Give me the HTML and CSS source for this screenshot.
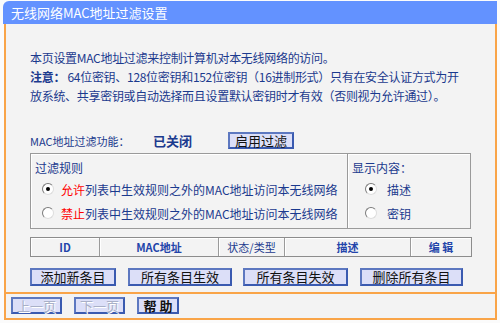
FILE: index.html
```html
<!DOCTYPE html>
<html lang="zh-CN">
<head>
    <meta charset="UTF-8">
    <title>无线网络MAC地址过滤设置</title>
    <link rel="stylesheet" href="styles.css">
</head>
<body>

<div class="frame">
    <div class="titlebar">无线网络MAC地址过滤设置</div>

    <div class="panel">
        <div class="content">
            <div class="line">本页设置MAC地址过滤来控制计算机对本无线网络的访问。</div>
            <div class="line"><strong>注意：</strong>&nbsp;64位密钥、128位密钥和152位密钥（16进制形式）只有在安全认证方式为开</div>
            <div class="line">放系统、共享密钥或自动选择而且设置默认密钥时才有效（否则视为允许通过）。</div>

            <div class="switch-row">
                <span class="switch-label">MAC地址过滤功能：</span>
                <span class="switch-state">已关闭</span>
                <button class="btn btn-enable">启用过滤</button>
            </div>

            <div class="boxes">
                <div class="box box-rules">
                    <div class="box-title">过滤规则</div>
                    <div class="radio-row">
                        <span class="radio checked"></span>
                        <span><em>允许</em>列表中生效规则之外的MAC地址访问本无线网络</span>
                    </div>
                    <div class="radio-row">
                        <span class="radio"></span>
                        <span><em>禁止</em>列表中生效规则之外的MAC地址访问本无线网络</span>
                    </div>
                </div>
                <div class="box box-show">
                    <div class="box-title">显示内容：</div>
                    <div class="radio-row">
                        <span class="radio checked"></span>
                        <span>描述</span>
                    </div>
                    <div class="radio-row">
                        <span class="radio"></span>
                        <span>密钥</span>
                    </div>
                </div>
            </div>

            <div class="table-head">
                <div class="cell col-id">ID</div>
                <div class="cell col-mac">MAC地址</div>
                <div class="cell col-state">状态/类型</div>
                <div class="cell col-desc">描述</div>
                <div class="cell col-edit">编 辑</div>
            </div>

            <div class="actions">
                <button class="btn btn-add">添加新条目</button>
                <button class="btn btn-on">所有条目生效</button>
                <button class="btn btn-off">所有条目失效</button>
                <button class="btn btn-del">删除所有条目</button>
            </div>
        </div>

        <div class="nav">
            <button class="btn btn-nav" disabled>上一页</button>
            <button class="btn btn-nav" disabled>下一页</button>
            <button class="btn btn-help">帮 助</button>
        </div>
    </div>
</div>

</body>
</html>
```

FILE: styles.css
```css
/* Reset */
* {
    box-sizing: border-box;
    margin: 0;
    padding: 0;
}

body {
    font-family: "Noto Sans CJK SC", "Liberation Sans", sans-serif;
    font-size: 12px;
    background-color: #fbfbfb;
    color: #1b3a8e;
}

/* Marco principal */
.frame {
    width: 494px;
    margin: 1px 0 0 3px;
}

.titlebar {
    height: 23px;
    line-height: 23px;
    padding-left: 8px;
    background-color: #6392ff;
    border-top-left-radius: 6px;
    color: #fff;
    font-size: 13px;
}

.panel {
    margin-left: 1px;
    border: 2px solid #f9a448;
    border-top: none;
    background-color: #f3f3f3;
}

.content {
    padding: 24px 0 6px 24px;
    border-bottom: 2px solid #f9a448;
}

/* Textos */
.line {
    height: 19px;
    line-height: 19px;
    white-space: nowrap;
    letter-spacing: -0.3px;
}

.line strong {
    font-weight: bold;
}

.switch-row {
    display: flex;
    align-items: center;
    height: 17px;
    margin-top: 27px;
}

.switch-label {
    width: 123px;
    font-size: 11px;
}

.switch-state {
    width: 75px;
    font-size: 13px;
    font-weight: bold;
}

/* Cajas */
.boxes {
    display: flex;
    margin-top: 4px;
    height: 76px;
}

.box {
    border: 1px solid #9a9a9a;
    box-shadow: inset 1px 1px 0 #fff;
    padding: 5px 0 0 4px;
}

.box-rules {
    width: 318px;
}

.box-show {
    width: 124px;
    margin-left: -1px;
}

.box-title {
    height: 18px;
    line-height: 18px;
}

.radio-row {
    display: flex;
    align-items: center;
    height: 24px;
    padding-left: 7px;
}

.radio-row em {
    font-style: normal;
    color: #f00;
}

.box-rules .radio-row .radio {
    margin-right: 7px;
}

.box-show .radio-row {
    padding-left: 13px;
}

.box-show .radio-row .radio {
    margin-right: 10px;
}

.radio {
    position: relative;
    width: 12px;
    height: 12px;
    border-radius: 50%;
    border: 1px solid #7a7a7a;
    border-right-color: #ddd;
    border-bottom-color: #ddd;
    background-color: #fff;
    flex-shrink: 0;
}

.radio.checked::after {
    content: "";
    position: absolute;
    left: 3px;
    top: 3px;
    width: 4px;
    height: 4px;
    border-radius: 50%;
    background-color: #000;
}

/* Encabezado de tabla */
.table-head {
    display: flex;
    width: 442px;
    height: 20px;
    margin-top: 8px;
    border: 1px solid #8c8c8c;
    background-color: #f3f3f3;
}

.cell {
    height: 18px;
    line-height: 18px;
    text-align: center;
    font-size: 11px;
    font-weight: bold;
    color: #2244aa;
    border-right: 1px solid #9a9a9a;
    box-shadow: inset 1px 1px 0 #fff;
}

.col-id { width: 69px; }
.col-mac { width: 119px; }
.col-state { width: 66px; font-weight: normal; color: #1b3a8e; }
.col-desc { width: 126px; }
.col-edit { flex: 1; border-right: none; }

/* Botones */
.btn {
    height: 18px;
    padding: 0;
    font-family: "Noto Sans CJK SC", "Liberation Sans", sans-serif;
    font-size: 13px;
    line-height: 14px;
    color: #111;
    background-color: #dcdff8;
    border: 2px solid #3a5ab0;
    border-top-color: #5d78c0;
    border-left-color: #5d78c0;
}

.btn-enable { width: 66px; height: 17px; }

.actions {
    display: flex;
    gap: 12px;
    margin-top: 11px;
}

.btn-add { width: 86px; }
.btn-on { width: 104px; margin-right: -1px; }
.btn-off { width: 105px; }
.btn-del { width: 103px; }

.nav {
    display: flex;
    gap: 12px;
    padding: 3px 0 4px 5px;
}

.btn-nav {
    width: 51px;
    height: 17px;
    color: #a9b0c8;
    text-shadow: 1px 1px 0 #fff;
}

.btn-help {
    width: 42px;
    height: 17px;
    font-weight: bold;
}
```
